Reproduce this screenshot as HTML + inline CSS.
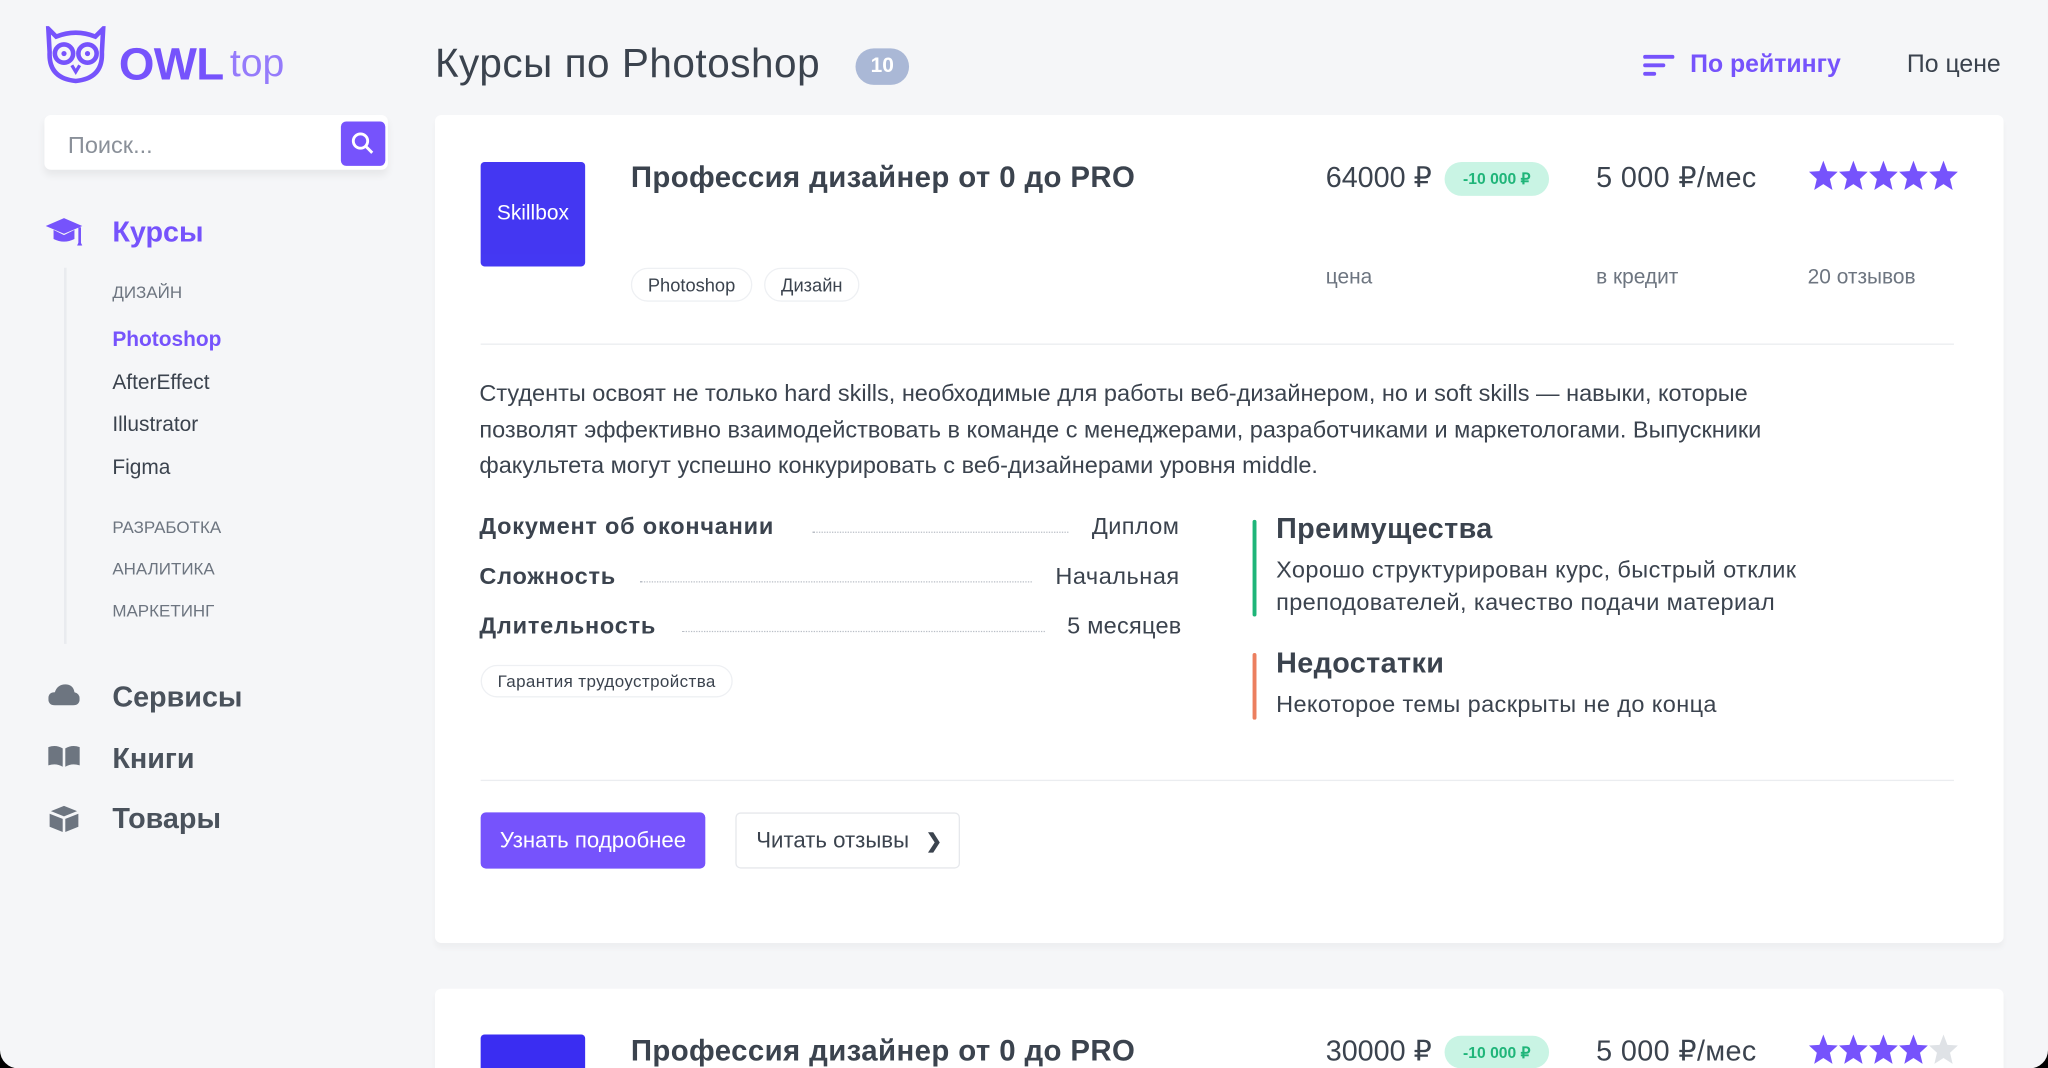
<!DOCTYPE html>
<html><head><meta charset="utf-8">
<style>
*{margin:0;padding:0;box-sizing:border-box}
html,body{width:2048px;height:1068px;overflow:hidden;background:#000}
#w{position:absolute;left:0;top:0;width:1568px;height:818px;transform:scale(1.30612);transform-origin:0 0;background:#f5f6f8;border-radius:0 0 14px 14px;overflow:hidden;font-family:"Liberation Sans","Noto Sans CJK SC",sans-serif;color:#3b434e}
.a{position:absolute;white-space:nowrap}
.p{color:#7653fc}
.card{position:absolute;left:333px;width:1201px;background:#fff;border-radius:5px;box-shadow:0 4px 4px rgba(0,0,0,.03)}
.tag{position:absolute;font-size:14px;border:1px solid #eef0f3;border-radius:20px;padding:4px 12px;color:#3b434e}
.lbl{font-size:16px;color:#6d7580}
.star{fill:#7653fc}
.dots{position:absolute;border-bottom:1px dotted #b9bec6;height:1px}
.b{font-weight:bold;letter-spacing:.3px}
</style></head><body>
<div id="w">
<svg class="a" style="left:33px;top:20px" width="50" height="44" viewBox="0 0 50 44" fill="none" stroke="#7653fc" stroke-width="3.5">
<path d="M4 2 L10 8 Q25 2 40 8 L46 2 L45 20 Q46 40 25 42 Q4 40 5 20 Z"/>
<circle cx="16" cy="21" r="7"/><circle cx="34" cy="21" r="7"/>
<path d="M22 30 L25 35 L28 30" stroke-width="2.5"/>
<circle cx="16" cy="21" r="2" fill="#7653fc" stroke="none"/><circle cx="34" cy="21" r="2" fill="#7653fc" stroke="none"/>
</svg>
<div class="a p" style="left:91px;top:30px;font-size:35px;font-weight:bold;letter-spacing:-0.5px">OWL</div>
<div class="a p" style="left:176px;top:32px;font-size:30px;font-weight:300;opacity:.75">top</div>
<div class="a" style="left:34px;top:88px;width:263px;height:42px;background:#fff;border-radius:5px;box-shadow:0 4px 6px rgba(0,0,0,.06)"></div>
<div class="a" style="left:52px;top:101px;font-size:18px;color:#8a9099">Поиск...</div>
<div class="a" style="left:261px;top:93px;width:34px;height:34px;background:#7653fc;border-radius:4px"></div>
<svg class="a" style="left:268px;top:100px" width="20" height="20" viewBox="0 0 20 20" fill="none" stroke="#fff" stroke-width="2.2"><circle cx="8" cy="8" r="5.5"/><path d="M12 12 L17 17"/></svg>
<svg class="a" style="left:35px;top:166px" width="30" height="26" viewBox="0 0 30 26" fill="#7653fc"><path d="M0 7 L14 1 L28 7 L14 13 Z"/><path d="M6 10 L6 17 Q14 21 22 17 L22 10 L14 14 Z"/><rect x="25" y="8" width="2" height="14"/><path d="M24 22 L26 18 L28 22 Z"/></svg>
<div class="a p" style="left:86px;top:165px;font-size:22px;font-weight:bold">Курсы</div>
<div class="a" style="left:49px;top:205px;width:2px;height:288px;background:#e9ebef"></div>
<div class="a" style="left:86px;top:216px;font-size:13px;color:#6d7580">ДИЗАЙН</div>
<div class="a p" style="left:86px;top:252px;font-size:16px;font-weight:bold">Photoshop</div>
<div class="a" style="left:86px;top:285px;font-size:16px">AfterEffect</div>
<div class="a" style="left:86px;top:317px;font-size:16px">Illustrator</div>
<div class="a" style="left:86px;top:350px;font-size:16px">Figma</div>
<div class="a" style="left:86px;top:396px;font-size:13px;color:#6d7580">РАЗРАБОТКА</div>
<div class="a" style="left:86px;top:428px;font-size:13px;color:#6d7580">АНАЛИТИКА</div>
<div class="a" style="left:86px;top:460px;font-size:13px;color:#6d7580">МАРКЕТИНГ</div>
<svg class="a" style="left:37px;top:523px" width="24" height="18" viewBox="0 0 24 18" fill="#6d7580"><path d="M5 17 Q0 17 0 12 Q0 7 5 7 Q7 1 13 1 Q19 1 20 7 Q24 8 24 12 Q24 17 19 17 Z"/></svg>
<div class="a" style="left:86px;top:521px;font-size:22px;font-weight:bold;color:#4a525c">Сервисы</div>
<svg class="a" style="left:36px;top:570px" width="26" height="18" viewBox="0 0 26 18" fill="#6d7580"><path d="M1 2 Q7 0 12 3 L12 17 Q7 14 1 16 Z M14 3 Q19 0 25 2 L25 16 Q19 14 14 17 Z"/></svg>
<div class="a" style="left:86px;top:568px;font-size:22px;font-weight:bold;color:#4a525c">Книги</div>
<svg class="a" style="left:37px;top:616px" width="24" height="22" viewBox="0 0 24 22" fill="#6d7580"><path d="M12 1 L22 5 L12 9 L2 5 Z M1 7 L11 11 L11 21 L1 17 Z M13 11 L23 7 L23 17 L13 21 Z"/></svg>
<div class="a" style="left:86px;top:614px;font-size:22px;font-weight:bold;color:#4a525c">Товары</div>
<div class="a" style="left:333px;top:31px;font-size:31px;letter-spacing:.4px;color:#3b434e">Курсы по Photoshop</div>
<div class="a" style="left:655px;top:37px;width:41px;height:28px;border-radius:14px;background:#aab8d6;color:#fff;font-size:16px;font-weight:bold;text-align:center;line-height:28px">10</div>
<svg class="a" style="left:1258px;top:41px" width="24" height="18" viewBox="0 0 24 18" fill="#7653fc"><rect x="0" y="1" width="24" height="3" rx="1.5"/><rect x="0" y="7.5" width="17" height="3" rx="1.5"/><rect x="0" y="14" width="10" height="3" rx="1.5"/></svg>
<div class="a p" style="left:1294px;top:39px;font-size:19px;font-weight:bold">По рейтингу</div>
<div class="a" style="left:1460px;top:39px;font-size:19px">По цене</div>
<div class="card" style="top:88px;height:634px"></div>
<div class="a" style="left:368px;top:124px;width:80px;height:80px;background:#3a2df2;border-radius:3px;color:#fff;font-size:16px;text-align:center;line-height:80px;opacity:.95">Skillbox</div>
<div class="a b" style="left:483px;top:123px;font-size:22.5px;color:#3b434e">Профессия дизайнер от 0 до PRO</div>
<div class="tag" style="left:483px;top:205px">Photoshop</div>
<div class="tag" style="left:585px;top:205px">Дизайн</div>
<div class="a" style="left:1015px;top:123px;font-size:22px">64000 ₽</div>
<div class="a" style="left:1106px;top:124px;width:80px;height:26px;border-radius:13px;background:#c9f4e4;color:#1fb579;font-size:12px;font-weight:bold;text-align:center;line-height:26px">-10 000 ₽</div>
<div class="a" style="left:1222px;top:123px;font-size:22px;letter-spacing:.3px">5 000 ₽/мес</div>
<svg class="a" style="left:1384px;top:122px" width="116" height="26" viewBox="0 0 116 26"><g class="star"><path id="s" d="M12 1 L15 9 L23 9.5 L17 15 L19 23.5 L12 19 L5 23.5 L7 15 L1 9.5 L9 9 Z"/><use href="#s" x="23"/><use href="#s" x="46"/><use href="#s" x="69"/><use href="#s" x="92"/></g></svg>
<div class="a lbl" style="left:1015px;top:204px">цена</div>
<div class="a lbl" style="left:1222px;top:204px">в кредит</div>
<div class="a lbl" style="left:1384px;top:204px">20 отзывов</div>
<div class="a" style="left:368px;top:263px;width:1128px;height:1px;background:#ebedf0"></div>
<div class="a" style="left:367px;top:288px;width:1040px;white-space:normal;font-size:18px;line-height:27.5px">Студенты освоят не только hard skills, необходимые для работы веб-дизайнером, но и soft skills — навыки, которые позволят эффективно взаимодействовать в команде с менеджерами, разработчиками и маркетологами. Выпускники факультета могут успешно конкурировать с веб-дизайнерами уровня middle.</div>
<div class="a b" style="left:367px;top:393px;font-size:18px;letter-spacing:.6px">Документ об окончании</div>
<div class="dots" style="left:622px;top:407px;width:196px"></div>
<div class="a" style="left:836px;top:393px;font-size:18px;letter-spacing:.3px">Диплом</div>
<div class="a b" style="left:367px;top:431px;font-size:18px;letter-spacing:.6px">Сложность</div>
<div class="dots" style="left:490px;top:445px;width:300px"></div>
<div class="a" style="left:808px;top:431px;font-size:18px;letter-spacing:.4px">Начальная</div>
<div class="a b" style="left:367px;top:469px;font-size:18px;letter-spacing:.6px">Длительность</div>
<div class="dots" style="left:522px;top:483px;width:278px"></div>
<div class="a" style="left:817px;top:469px;font-size:18px;letter-spacing:.2px">5 месяцев</div>
<div class="tag" style="left:368px;top:509px;font-size:13px;letter-spacing:.3px">Гарантия трудоустройства</div>
<div class="a" style="left:959px;top:398px;width:3px;height:74px;background:#1fb579;border-radius:2px"></div>
<div class="a b" style="left:977px;top:392px;font-size:22px">Преимущества</div>
<div class="a" style="left:977px;top:424px;width:500px;white-space:normal;font-size:18px;line-height:25px;letter-spacing:.3px">Хорошо структурирован курс, быстрый отклик преподователей, качество подачи материал</div>
<div class="a" style="left:959px;top:500px;width:3px;height:51px;background:#ec7f5f;border-radius:2px"></div>
<div class="a b" style="left:977px;top:495px;font-size:22px">Недостатки</div>
<div class="a" style="left:977px;top:529px;font-size:18px;letter-spacing:.3px">Некоторое темы раскрыты не до конца</div>
<div class="a" style="left:368px;top:597px;width:1128px;height:1px;background:#ebedf0"></div>
<div class="a" style="left:368px;top:622px;width:172px;height:43px;background:#7653fc;border-radius:4px;color:#fff;font-size:17px;text-align:center;line-height:43px">Узнать подробнее</div>
<div class="a" style="left:563px;top:622px;width:172px;height:43px;border:1px solid #e6e8ec;border-radius:4px;font-size:17px;line-height:41px;padding-left:15px">Читать отзывы <span style="font-size:15px;margin-left:8px;font-weight:bold">&#x276F;</span></div>
<div class="card" style="top:757px;height:61px;border-radius:5px 5px 0 0"></div>
<div class="a" style="left:368px;top:792px;width:80px;height:26px;background:#3a2df2;border-radius:3px 3px 0 0"></div>
<div class="a b" style="left:483px;top:792px;font-size:22.5px">Профессия дизайнер от 0 до PRO</div>
<div class="a" style="left:1015px;top:792px;font-size:22px">30000 ₽</div>
<div class="a" style="left:1106px;top:793px;width:80px;height:25px;border-radius:13px;background:#c9f4e4;color:#1fb579;font-size:12px;font-weight:bold;text-align:center;line-height:26px">-10 000 ₽</div>
<div class="a" style="left:1222px;top:792px;font-size:22px;letter-spacing:.3px">5 000 ₽/мес</div>
<svg class="a" style="left:1384px;top:791px" width="116" height="26" viewBox="0 0 116 26"><g class="star"><use href="#s"/><use href="#s" x="23"/><use href="#s" x="46"/><use href="#s" x="69"/></g><use href="#s" x="92" fill="#dfe2e6"/></svg>
</div>
</body></html>
